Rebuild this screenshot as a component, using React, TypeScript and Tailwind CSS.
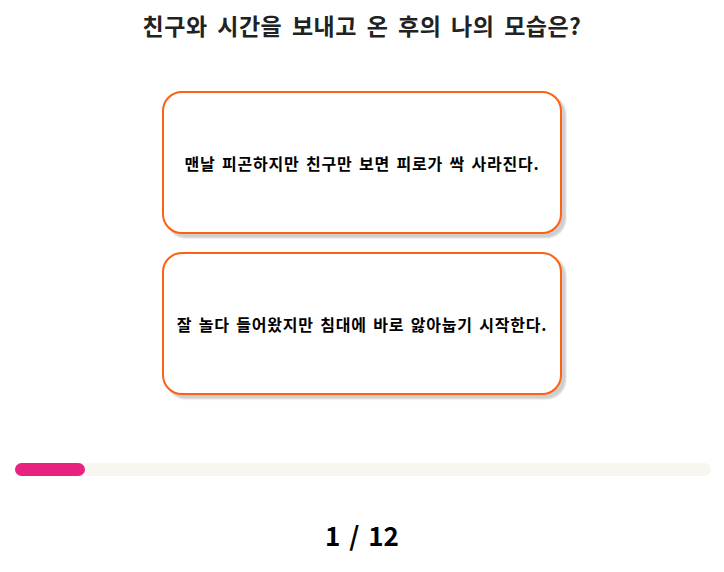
import React from "react";

export default function App() {
  const options = [
    "맨날 피곤하지만 친구만 보면 피로가 싹 사라진다.",
    "잘 놀다 들어왔지만 침대에 바로 앓아눕기 시작한다.",
  ];
  return (
    <div
      className="w-[724px] h-[572px] bg-white flex flex-col items-center"
      style={{ fontFamily: '"Noto Sans CJK KR", "Noto Sans", sans-serif' }}
    >
      <h1 className="mt-[9px] h-[32px] text-[23px] leading-[32px] font-bold text-[#222222] tracking-[0.5px] [word-spacing:4px]">
        친구와 시간을 보내고 온 후의 나의 모습은?
      </h1>
      <div className="mt-[50px] flex flex-col gap-[18px]">
        {options.map((t) => (
          <button
            key={t}
            className="w-[400px] h-[143px] bg-white border-2 border-[#ff6011] rounded-[20px] shadow-[4px_4px_2px_#cfcfcf] flex items-center justify-center text-[16px] font-bold text-black tracking-[0.8px] [word-spacing:2px]"
          >
            {t}
          </button>
        ))}
      </div>
      <div className="mt-[68px] ml-[2px] w-[696px] h-[13px] rounded-full bg-[#f9f6f2]">
        <div className="h-full w-[70px] rounded-full bg-[#e8237f]" />
      </div>
      <div className="mt-[44px] text-[26px] leading-[30px] font-bold text-black [word-spacing:3px]">1 / 12</div>
    </div>
  );
}
